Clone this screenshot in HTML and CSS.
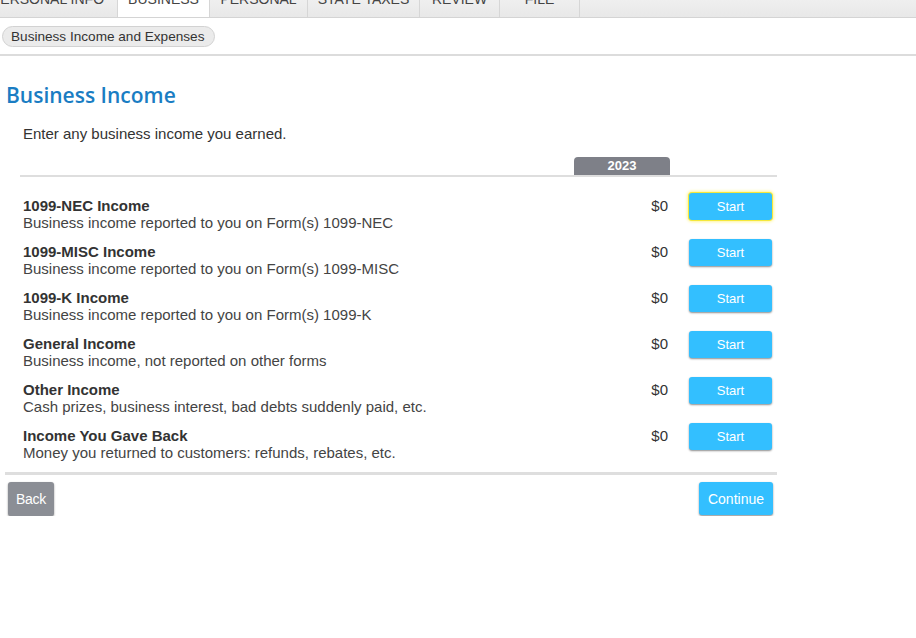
FILE: index.html
```html
<!doctype html>
<html lang="en">
  <head>
    <title>Business Income</title>
    <meta charset="utf-8"/>
    <link rel="stylesheet" href="styles.css">
  </head>
  <body>
    <!-- top tab bar, scrolled so only the bottom of it shows -->
    <div id="tabs">
      <div class="tab tab_first"><span>PERSONAL INFO</span></div>
      <div class="tab tab_active"><span>BUSINESS</span></div>
      <div class="tab tab_w98"><span>PERSONAL</span></div>
      <div class="tab tab_w112"><span>STATE TAXES</span></div>
      <div class="tab tab_w80"><span>REVIEW</span></div>
      <div class="tab tab_w80"><span>FILE</span></div>
    </div>

    <div id="crumbs">
      <span class="crumb">Business Income and Expenses</span>
    </div>

    <div id="wrapper">
      <h1>Business Income</h1>
      <p class="intro">Enter any business income you earned.</p>

      <div id="income_table">
        <div class="year_row">
          <div></div>
          <div class="year_tab">2023</div>
          <div></div>
        </div>

        <div class="income_row">
          <div class="income_text">
            <div class="income_title">1099-NEC Income</div>
            <div class="income_desc">Business income reported to you on Form(s) 1099-NEC</div>
          </div>
          <div class="amount">$0</div>
          <div><button class="btn btn_start btn_focus">Start</button></div>
        </div>

        <div class="income_row">
          <div class="income_text">
            <div class="income_title">1099-MISC Income</div>
            <div class="income_desc">Business income reported to you on Form(s) 1099-MISC</div>
          </div>
          <div class="amount">$0</div>
          <div><button class="btn btn_start">Start</button></div>
        </div>

        <div class="income_row">
          <div class="income_text">
            <div class="income_title">1099-K Income</div>
            <div class="income_desc">Business income reported to you on Form(s) 1099-K</div>
          </div>
          <div class="amount">$0</div>
          <div><button class="btn btn_start">Start</button></div>
        </div>

        <div class="income_row">
          <div class="income_text">
            <div class="income_title">General Income</div>
            <div class="income_desc">Business income, not reported on other forms</div>
          </div>
          <div class="amount">$0</div>
          <div><button class="btn btn_start">Start</button></div>
        </div>

        <div class="income_row">
          <div class="income_text">
            <div class="income_title">Other Income</div>
            <div class="income_desc">Cash prizes, business interest, bad debts suddenly paid, etc.</div>
          </div>
          <div class="amount">$0</div>
          <div><button class="btn btn_start">Start</button></div>
        </div>

        <div class="income_row">
          <div class="income_text">
            <div class="income_title">Income You Gave Back</div>
            <div class="income_desc">Money you returned to customers: refunds, rebates, etc.</div>
          </div>
          <div class="amount">$0</div>
          <div><button class="btn btn_start">Start</button></div>
        </div>
      </div>

      <div id="nav_buttons">
        <button class="btn btn_back">Back</button>
        <button class="btn btn_continue">Continue</button>
      </div>
    </div>
  </body>
</html>
```

FILE: styles.css
```css
/* page */
body{
  margin: 0;
  font-family: "Liberation Sans", Arial, sans-serif;
  font-size: 15px;
  color: #333;
  background: #fff;
}

/* tab bar */
#tabs{
  display: flex;
  height: 17px;
  overflow: hidden;
  background: linear-gradient(#efefef, #e8e8e8);
  border-bottom: 1px solid #d4d4d4;
}
.tab{
  flex: none;
  border-right: 1px solid #d6d6d6;
  text-align: center;
  font-size: 14px;
  line-height: 14px;
  color: #444;
  white-space: nowrap;
}
.tab span{
  display: block;
  margin-top: -8px;
}
.tab_first{
  width: 117px;
  margin-left: -10px;
  padding-left: 10px;
  box-sizing: content-box;
}
.tab_first span{
  margin-left: -22px;
}
.tab_active{
  width: 91px;
  background: #fff;
  height: 18px;
}
.tab_w98{ width: 97px; }
.tab_w112{ width: 111px; }
.tab_w80{ width: 79px; }

/* breadcrumb */
#crumbs{
  padding: 8px 2px 7px 2px;
  border-bottom: 2px solid #dcdcdc;
}
.crumb{
  display: inline-block;
  height: 19px;
  line-height: 19px;
  padding: 0 10px 0 8px;
  font-size: 13.6px;
  color: #333;
  background: #ebebeb;
  border: 1px solid #d2d2d2;
  border-radius: 11px;
}

/* main area */
#wrapper{
  width: 772px;
  padding: 0 0 0 5px;
}
h1{
  margin: 24px 0 0 1px;
  font-family: "Open Sans", sans-serif;
  font-size: 21px;
  font-weight: 600;
  line-height: 30px;
  color: #1a7dc3;
}
.intro{
  margin: 15px 0 0 18px;
  line-height: 17px;
}

/* income table */
#income_table{
  margin: 15px 0 0 15px;
}
.year_row,
.income_row{
  display: grid;
  grid-template-columns: 1fr 96px 107px;
}
.year_row{
  height: 18px;
  border-bottom: 2px solid #dedede;
}
.year_tab{
  background: #7e8088;
  color: #fff;
  font-size: 13px;
  font-weight: bold;
  text-align: center;
  line-height: 18px;
  border-radius: 4px 4px 0 0;
}
.income_row{
  height: 46px;
  padding-top: 2px;
  box-sizing: border-box;
  line-height: 17px;
  align-items: start;
}
#income_table .income_row:nth-child(2){
  margin-top: 14px;
}
.income_text,
.amount{
  padding-top: 4px;
}
.income_title{
  margin-left: 3px;
  font-weight: bold;
  color: #333;
}
.income_desc{
  margin-left: 3px;
  color: #444;
}
.amount{
  text-align: right;
  padding-right: 2px;
  color: #333;
}

/* buttons */
.btn{
  border: none;
  border-radius: 3px;
  color: #fff;
  font-family: "Liberation Sans", Arial, sans-serif;
  box-shadow: 0 1px 2px rgba(0, 0, 0, 0.45);
  cursor: pointer;
}
.btn_start{
  display: block;
  margin-left: 19px;
  width: 83px;
  height: 27px;
  font-size: 13px;
  background-color: #33bfff;
}
.btn_focus{
  box-shadow: 0 0 0 1px #f5e83a, 0 0 3px 2px #fff59a;
}
#nav_buttons{
  display: flex;
  justify-content: space-between;
  align-items: flex-start;
  margin-top: 5px;
  padding: 7px 4px 0 3px;
  border-top: 3px solid #dedede;
}
.btn_back{
  height: 34px;
  padding: 0 8px;
  font-size: 14px;
  letter-spacing: -0.3px;
  background-color: #8b8e95;
}
.btn_continue{
  height: 33px;
  padding: 0 9px;
  font-size: 14px;
  background-color: #33bfff;
}
```
